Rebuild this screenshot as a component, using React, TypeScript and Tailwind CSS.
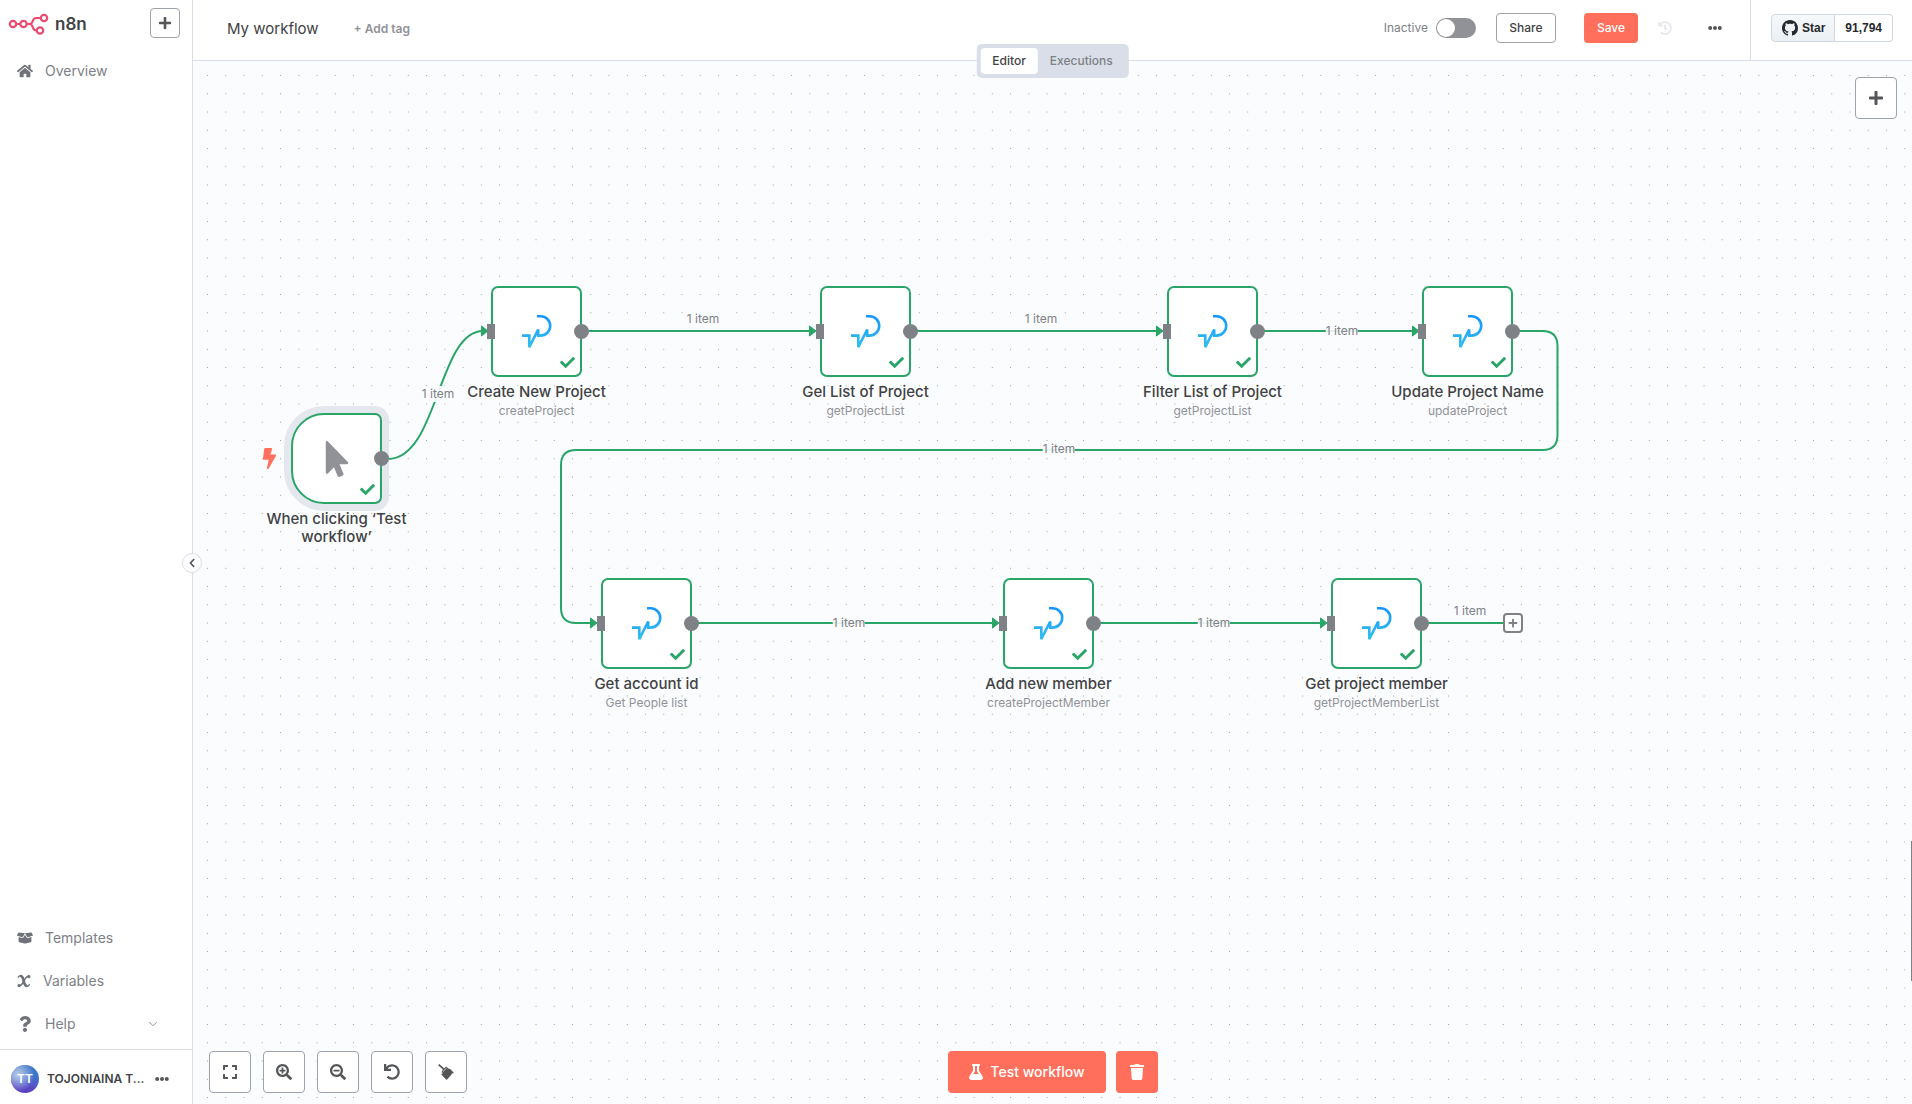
import React from "react";
import {
  FaBolt,
  FaBoxOpen,
  FaCheck,
  FaChevronLeft,
  FaEllipsisH,
  FaExpand,
  FaFlask,
  FaHistory,
  FaHome,
  FaMousePointer,
  FaPlus,
  FaQuestion,
  FaSearchMinus,
  FaSearchPlus,
  FaTrash,
  FaUndo,
} from "react-icons/fa";
import { ChevronDown } from "lucide-react";

/* ---------- drawings ---------- */

function Logo() {
  return (
    <svg width="41" height="22" viewBox="0 0 41 22" fill="none" stroke="#ea4b71" strokeWidth="2.2" aria-hidden="true">
      <circle cx="5" cy="11" r="3.2" />
      <circle cx="15.5" cy="11" r="3.2" />
      <circle cx="36" cy="5" r="3.2" />
      <circle cx="32" cy="17.5" r="3.2" />
      <path d="M8.2 11h4.1M18.7 11h2.6c5 0 2-6 7-6h4.5M21.3 11c5 0 2 6.500 7 6.500h.6" />
    </svg>
  );
}

function OctocatIcon() {
  return (
    <svg width="16" height="16" viewBox="0 0 16 16" fill="currentColor" aria-hidden="true">
      <path d="M8 0C3.58 0 0 3.58 0 8c0 3.54 2.29 6.53 5.47 7.59.4.07.55-.17.55-.38 0-.19-.01-.82-.01-1.49-2.01.37-2.53-.49-2.69-.94-.09-.23-.48-.94-.82-1.13-.28-.15-.68-.52-.01-.53.63-.01 1.08.58 1.23.82.72 1.21 1.87.87 2.33.66.07-.52.28-.87.51-1.07-1.78-.2-3.64-.89-3.64-3.95 0-.87.31-1.59.82-2.15-.08-.2-.36-1.02.08-2.12 0 0 .67-.21 2.2.82.64-.18 1.32-.27 2-.27s1.36.09 2 .27c1.530-1.040 2.200-.82 2.200-.82.44 1.100.16 1.920.08 2.120.51.56.82 1.270.82 2.150 0 3.070-1.870 3.750-3.650 3.950.29.25.54.73.54 1.480 0 1.070-.01 1.930-.01 2.200 0 .21.15.46.55.38A8.010 8.010 0 0 0 16 8c0-4.420-3.580-8-8-8z" />
    </svg>
  );
}

function VariableIcon() {
  return (
    <svg width="14" height="14" viewBox="0 0 14 14" fill="none" stroke="currentColor" strokeLinecap="round" aria-hidden="true">
      <path d="M1.200 3.200C2 2 3 1.500 4 1.500" strokeWidth="1.300" />
      <path d="M4.300 2.300C6 3 6.300 5.200 6.700 7 7.100 9 7.600 11 9 11.700" strokeWidth="2.700" />
      <path d="M9.400 12.500C10.700 12.500 11.700 11.700 12.400 10.600" strokeWidth="1.300" />
      <path d="M12 2.300C9.600 1.600 8.300 4.500 6.900 7 5.500 9.500 4.300 12.400 2 11.700" strokeWidth="1.500" />
      <circle cx="11.900" cy="2.600" r="1" fill="currentColor" strokeWidth="1.200" />
      <circle cx="2" cy="11.500" r="1" fill="currentColor" strokeWidth="1.200" />
    </svg>
  );
}

function TidyIcon() {
  return (
    <svg width="16" height="16" viewBox="0 0 16 16" aria-hidden="true">
      <path
        fill="currentColor"
        d="M1.300 0 6 4.200 8.300 2.400 10.300 4.600 12.200 5 16 8.900 14.400 9.600 13.900 8.900 14 10.100 8.600 16 3.100 10.300 5 9.100 3.400 8.300 4.900 5.600.1 1.300Z"
      />
      <path stroke="#fff" strokeWidth="0.700" d="M8.800 3.800 4.800 7.700" />
    </svg>
  );
}

function ProjectIcon() {
  return (
    <svg width="31" height="35" viewBox="0 0 31 35" fill="none" aria-hidden="true">
      <defs>
        <linearGradient id="brand" x1="0" y1="0" x2="0" y2="35" gradientUnits="userSpaceOnUse">
          <stop offset="0" stopColor="#1492ff" />
          <stop offset="1" stopColor="#35c2ea" />
        </linearGradient>
      </defs>
      <path
        d="M16 2.200H19.500A9.700 9.700 0 0 1 19.500 21.600H17.200V15.500L8.300 33.200V21.600H1"
        stroke="url(#brand)"
        strokeWidth="2.600"
      />
    </svg>
  );
}

/* ---------- canvas data, in canvas coordinates ---------- */

type CanvasNode = { x: number; y: number; title: string; subtitle: string };

const nodes: CanvasNode[] = [
  { x: 298, y: 225, title: "Create New Project", subtitle: "createProject" },
  { x: 627, y: 225, title: "Gel List of Project", subtitle: "getProjectList" },
  { x: 974, y: 225, title: "Filter List of Project", subtitle: "getProjectList" },
  { x: 1229, y: 225, title: "Update Project Name", subtitle: "updateProject" },
  { x: 408, y: 517, title: "Get account id", subtitle: "Get People list" },
  { x: 810, y: 517, title: "Add new member", subtitle: "createProjectMember" },
  { x: 1138, y: 517, title: "Get project member", subtitle: "getProjectMemberList" },
];

const edges = [
  "M195 398C245 398 245 270 290 270",
  "M390 270H620",
  "M720 270H967",
  "M1066 270H1223",
  "M1322 270H1349.500Q1364.500 270 1364.500 285V374Q1364.500 389 1349.500 389H383Q368 389 368 404V547Q368 562 383 562H401",
  "M500 562H803",
  "M902 562H1131",
];

const arrows = [
  { x: 295, y: 270 },
  { x: 623, y: 270 },
  { x: 970, y: 270 },
  { x: 1226, y: 270 },
  { x: 404, y: 562 },
  { x: 806, y: 562 },
  { x: 1134, y: 562 },
];

const labels = [
  { x: 245, y: 333 },
  { x: 510, y: 258 },
  { x: 848, y: 258 },
  { x: 1149, y: 270 },
  { x: 866, y: 388 },
  { x: 656, y: 562 },
  { x: 1021, y: 562 },
  { x: 1277, y: 550 },
];

function NodeCard({ node }: { node: CanvasNode }) {
  return (
    <div className="absolute w-[91px]" style={{ left: node.x, top: node.y }}>
      <div className="relative flex h-[91px] w-[91px] items-center justify-center rounded-[7px] border-2 border-[#29a568] bg-white">
        <ProjectIcon />
        <span className="absolute -left-[6px] h-[15px] w-2 bg-[#7e8186]" />
        <span className="absolute -right-[9px] h-[15px] w-[15px] rounded-full bg-[#7e8186]" />
        <FaCheck className="absolute right-[5px] bottom-[5px] h-[15px] w-[15px] text-[#29a568]" />
      </div>
      <div className="relative left-1/2 mt-[5px] w-max -translate-x-1/2 text-center">
        <div className="text-[15px] leading-[19px] font-medium text-[#414244]">{node.title}</div>
        <div className="text-xs leading-5 text-[#909298]">{node.subtitle}</div>
      </div>
    </div>
  );
}

function ToolButton({ label, children }: { label: string; children: React.ReactNode }) {
  return (
    <button
      type="button"
      aria-label={label}
      className="flex h-[42px] w-[42px] items-center justify-center rounded border border-[#9ea2ad] bg-white text-base text-[#555658]"
    >
      {children}
    </button>
  );
}

function MenuItem({ icon, label, chevron }: { icon: React.ReactNode; label: string; chevron?: boolean }) {
  return (
    <a href="#" className="flex h-[43px] items-center pr-8 pl-[17px] text-[#7e8186]">
      <span className="flex min-w-[14px] justify-center text-[#6f7279]">{icon}</span>
      <span className="ml-3 flex-1 text-sm">{label}</span>
      {chevron && <ChevronDown size={14} strokeWidth={1.500} />}
    </a>
  );
}

/* ---------- page parts ---------- */

function Sidebar() {
  return (
    <aside className="relative flex w-[193px] shrink-0 flex-col border-r border-[#d9dee8] bg-white">
      <div className="flex items-start justify-between pt-2 pr-3 pl-2">
        <div className="flex items-center gap-1.5 pt-1">
          <Logo />
          <span className="text-[17px] leading-6 font-semibold text-[#414244]">n8n</span>
        </div>
        <button
          type="button"
          aria-label="Create"
          className="flex h-[30px] w-[30px] items-center justify-center rounded border border-[#9ea2ad] bg-white text-sm text-[#555658]"
        >
          <FaPlus />
        </button>
      </div>
      <nav className="flex flex-1 flex-col pt-[11px] pb-1">
        <MenuItem icon={<FaHome size={16} />} label="Overview" />
        <div className="mt-auto">
          <MenuItem icon={<FaBoxOpen size={16} />} label="Templates" />
          <MenuItem icon={<VariableIcon />} label="Variables" />
          <MenuItem icon={<FaQuestion size={16} />} label="Help" chevron />
        </div>
      </nav>
      <div className="flex h-[55px] items-center border-t border-[#d9dee8] pt-1 pl-[11px]">
        <div className="flex h-7 w-7 items-center justify-center rounded-full bg-[linear-gradient(200deg,#3173c5_0%,#3a78c9_30%,#5b47c5_70%,#5b3cc0_100%)]">
          <span className="flex h-7 w-7 items-center justify-center rounded-full bg-[radial-gradient(circle_at_25%_35%,#b9cfe8_0%,#9ab0de99_35%,transparent_60%)] text-xs font-semibold text-white">
            TT
          </span>
        </div>
        <span className="ml-2 text-xs font-semibold whitespace-nowrap text-[#414244]">TOJONIAINA T...</span>
        <button type="button" aria-label="User menu" className="mr-[23px] ml-auto text-sm text-[#555658]">
          <FaEllipsisH />
        </button>
      </div>
      <button
        type="button"
        aria-label="Collapse sidebar"
        className="absolute top-[553px] -right-[10px] z-20 flex h-5 w-5 items-center justify-center rounded-full border border-[#d9dee8] bg-white text-[10px] text-[#555658]"
      >
        <FaChevronLeft />
      </button>
    </aside>
  );
}

function Header() {
  return (
    <header className="flex h-[61px] shrink-0 border-b border-[#d9dee8] bg-white">
      <div className="flex flex-1 items-center pb-1 pl-[34px]">
        <h1 className="pt-0.5 text-[15px] text-[#414244]">My workflow</h1>
        <button type="button" className="ml-[35px] pt-0.5 text-xs font-semibold text-[#909298]">
          + Add tag
        </button>
        <div className="ml-auto flex items-center pr-7">
          <label className="flex items-center gap-2 text-xs text-[#7e8186]">
            Inactive
            <input type="checkbox" role="switch" className="peer sr-only" />
            <span className="flex h-5 w-10 items-center rounded-full bg-[#909298] px-px">
              <span className="h-[18px] w-[18px] rounded-full bg-white" />
            </span>
          </label>
          <button
            type="button"
            className="ml-5 h-[30px] w-[60px] rounded border border-[#9ea2ad] text-xs font-medium text-[#414244]"
          >
            Share
          </button>
          <button type="button" className="ml-7 h-[30px] w-[54px] rounded bg-[#ff6f5c] text-xs font-medium text-white">
            Save
          </button>
          <button type="button" aria-label="Workflow history" className="ml-5 text-sm text-[#e4e7ee]">
            <FaHistory />
          </button>
          <button type="button" aria-label="More actions" className="ml-9 text-sm text-[#555658]">
            <FaEllipsisH />
          </button>
        </div>
      </div>
      <div className="flex items-center border-l border-[#d9dee8] pr-[19px] pb-1 pl-5 font-['Liberation_Sans',Arial,sans-serif] text-xs font-bold text-[#25292e]">
        <a
          href="#"
          className="flex h-7 items-center gap-1 rounded-l border border-[#d1d9e0] bg-linear-to-b from-[#f6f8fa] to-[#ebf0f4] pr-[9px] pl-[10px]"
        >
          <OctocatIcon />
          Star
        </a>
        <a href="#" className="flex h-7 items-center rounded-r border border-l-0 border-[#d1d9e0] px-[10px]">
          91,794
        </a>
      </div>
    </header>
  );
}

function Canvas() {
  return (
    <main className="relative flex-1 overflow-hidden bg-[#fbfcfe]">
      <svg className="absolute inset-0 h-full w-full" aria-hidden="true">
        <defs>
          <pattern id="grid" x="5.400" y="5.400" width="18.250" height="18.250" patternUnits="userSpaceOnUse">
            <circle cx="9.100" cy="9.100" r="0.500" fill="#85868c" />
          </pattern>
        </defs>
        <rect width="100%" height="100%" fill="url(#grid)" />
        <g fill="none" stroke="#29a568" strokeWidth="2">
          {edges.map((d) => (
            <path key={d} d={d} />
          ))}
          <path d="M1230 562H1310" />
        </g>
        <g fill="#29a568" stroke="#29a568" strokeLinejoin="round">
          {arrows.map((a) => (
            <path key={`${a.x}-${a.y}`} d={`M${a.x} ${a.y}l-6.500-5v10z`} />
          ))}
        </g>
      </svg>

      {labels.map((l) => (
        <span
          key={`${l.x}-${l.y}`}
          className="absolute -translate-x-1/2 -translate-y-1/2 bg-[#fbfcfee6] text-xs whitespace-nowrap text-[#7e8186]"
          style={{ left: l.x, top: l.y }}
        >
          1 item
        </span>
      ))}

      {nodes.map((n) => (
        <NodeCard key={n.title} node={n} />
      ))}

      <div className="absolute top-[352px] left-[98px] w-[91px]">
        <div className="relative flex h-[91px] w-[91px] items-center justify-center rounded-l-[33px] rounded-r-[7px] border-2 border-[#29a568] bg-white shadow-[0_0_0_7px_#e4e7ee]">
          <FaMousePointer className="h-9 w-9 text-[#909298]" />
          <FaBolt className="absolute -left-[34px] h-[21px] w-[21px] text-[#ff6f5c]" />
          <span className="absolute -right-[9px] h-[15px] w-[15px] rounded-full bg-[#7e8186]" />
          <FaCheck className="absolute right-[5px] bottom-[5px] h-[15px] w-[15px] text-[#29a568]" />
        </div>
        <div className="relative left-1/2 mt-1.5 w-36 -translate-x-1/2 text-center text-[15px] leading-[18px] font-medium text-[#414244]">
          When clicking ‘Test workflow’
        </div>
      </div>

      <button
        type="button"
        aria-label="Add node"
        className="absolute top-[552px] left-[1310px] flex h-5 w-5 items-center justify-center rounded border-2 border-[#7e8186] bg-white text-[10px] text-[#7e8186]"
      >
        <FaPlus />
      </button>

      <div className="absolute top-4 right-[15px]">
        <ToolButton label="Open nodes panel">
          <FaPlus />
        </ToolButton>
      </div>

      <div className="absolute bottom-[11px] left-4 flex gap-3">
        <ToolButton label="Zoom to fit">
          <FaExpand />
        </ToolButton>
        <ToolButton label="Zoom in">
          <FaSearchPlus />
        </ToolButton>
        <ToolButton label="Zoom out">
          <FaSearchMinus />
        </ToolButton>
        <ToolButton label="Reset zoom">
          <FaUndo />
        </ToolButton>
        <ToolButton label="Tidy up">
          <TidyIcon />
        </ToolButton>
      </div>

      <div className="absolute bottom-[11px] left-1/2 flex -translate-x-1/2 gap-2.5">
        <button
          type="button"
          className="flex h-[42px] w-[158px] items-center justify-center gap-1.5 rounded bg-[#ff6f5c] text-sm font-medium text-white"
        >
          <FaFlask size={16} />
          Test workflow
        </button>
        <button
          type="button"
          aria-label="Clear execution data"
          className="flex h-[42px] w-[42px] items-center justify-center rounded bg-[#ff6f5c] text-white"
        >
          <FaTrash size={16} />
        </button>
      </div>

      <div className="absolute right-0 bottom-[123px] h-[140px] w-px bg-[#7e8186]" />
    </main>
  );
}

export default function App() {
  return (
    <div className="flex h-screen overflow-hidden bg-white font-['Inter',sans-serif]">
      <Sidebar />
      <div className="relative flex min-w-0 flex-1 flex-col">
        <Header />
        <div
          role="tablist"
          className="absolute top-11 left-1/2 z-10 flex h-[34px] -translate-x-1/2 rounded-[5px] bg-[#d9dee8] p-1 text-xs font-medium"
        >
          <button type="button" role="tab" aria-selected="true" className="rounded bg-white px-3 text-[#414244]">
            Editor
          </button>
          <button type="button" role="tab" aria-selected="false" className="rounded px-3 text-[#7e8186]">
            Executions
          </button>
        </div>
        <Canvas />
      </div>
    </div>
  );
}
